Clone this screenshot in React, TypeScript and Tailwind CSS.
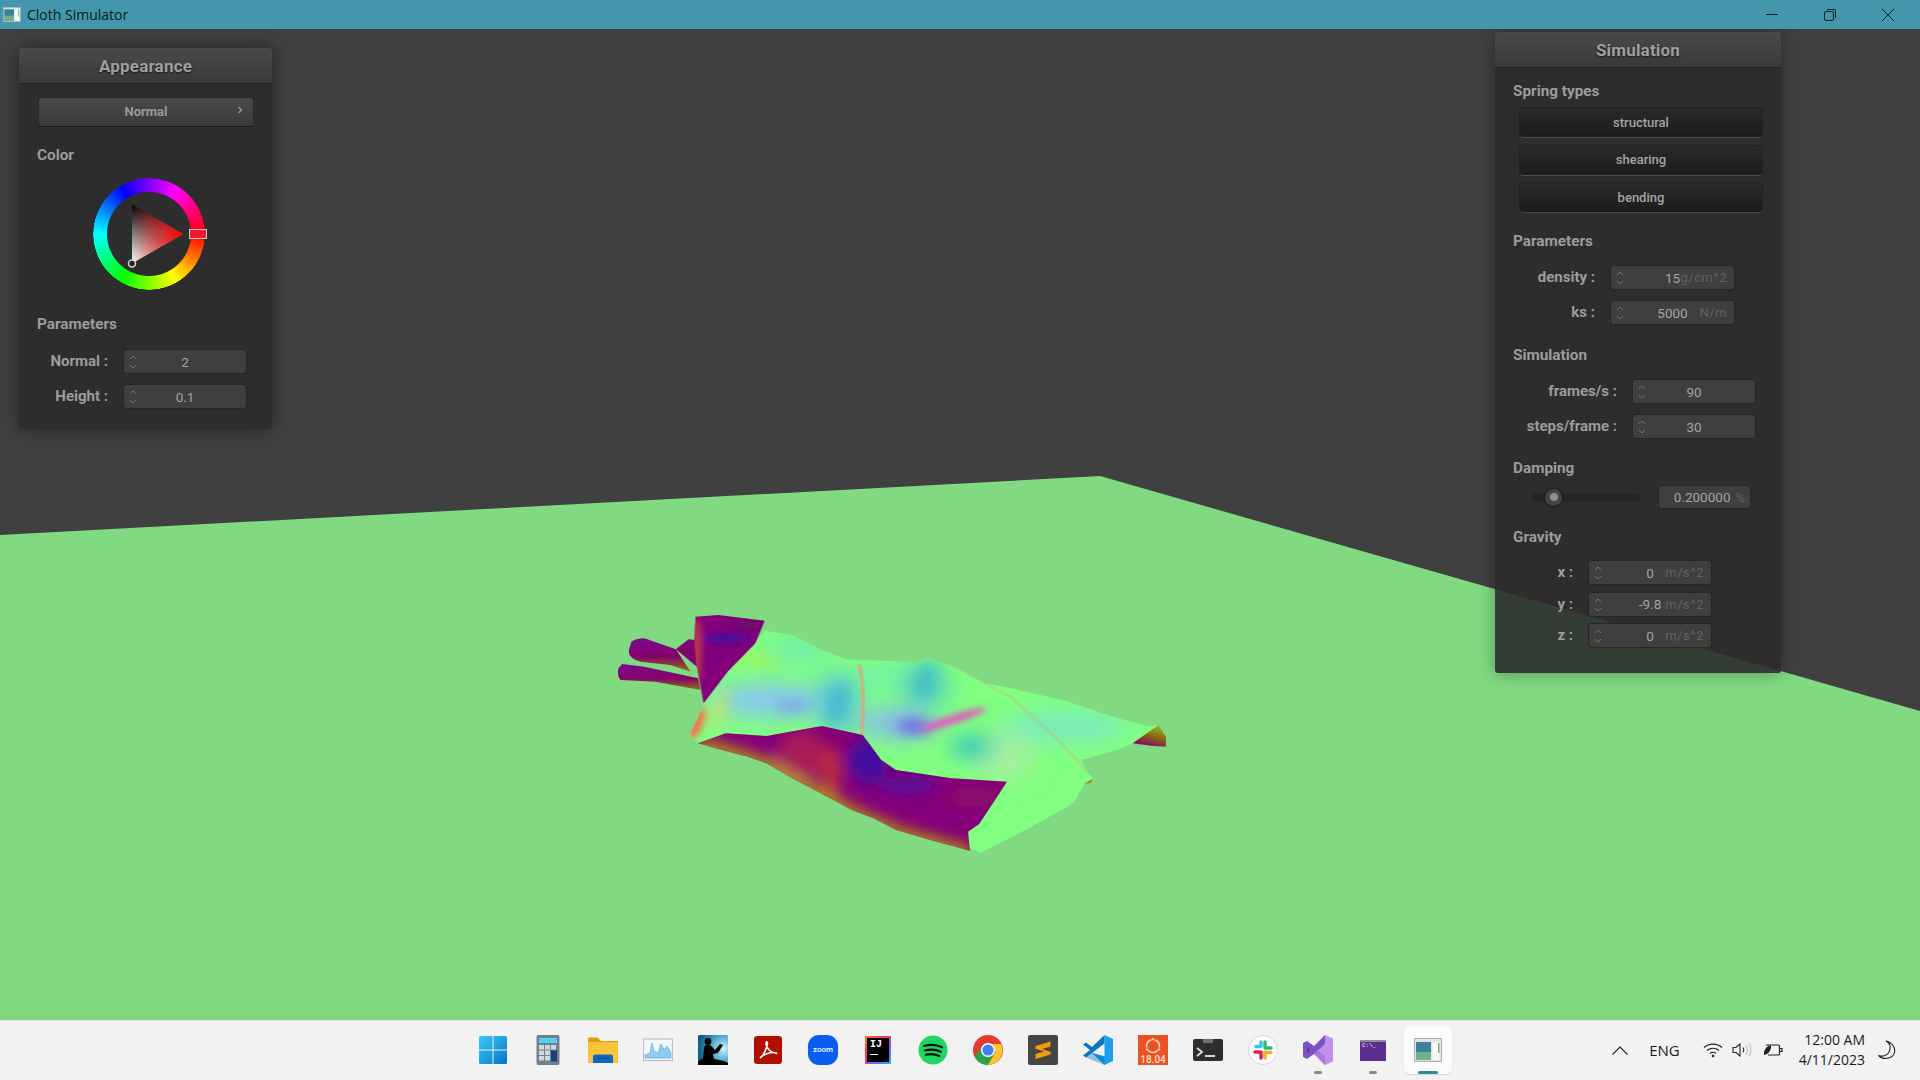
import React from "react";

const SANS = "font-['Roboto','Liberation_Sans',sans-serif]";

function SectionLabel({ children }: { children: React.ReactNode }) {
  return (
    <div className="ml-[18px] flex h-5 items-center pt-[3px] text-[15.3px] font-bold leading-none text-[#9c9c9c]">
      {children}
    </div>
  );
}

function Spinner({ value, unit, className }: { value: string; unit?: string; className: string }) {
  return (
    <div
      className={`relative flex h-[23px] shrink-0 items-center justify-center rounded-[3px] bg-[#3f3f3f] pt-px text-[13.5px] shadow-[0_0_0_1px_#262626] ${className}`}
    >
      <svg viewBox="0 0 8 16" className="absolute left-[5px] top-[4px] h-4 w-2" fill="none" stroke="#747474" strokeWidth="1">
        <path d="M1 5l3-3 3 3M1 11l3 3 3-3" />
      </svg>
      <span className="text-[#a4a4a4]">{value}</span>
      {unit && (
        <span className="absolute right-[7px] text-[13px] tracking-[0.5px] text-[#626262]">{unit}</span>
      )}
    </div>
  );
}

function Row({
  label,
  labelClass,
  children,
}: {
  label: string;
  labelClass: string;
  children: React.ReactNode;
}) {
  return (
    <div className="flex h-[23px] items-center gap-4">
      <span className={`text-right text-[15px] font-bold text-[#9c9c9c] ${labelClass}`}>{label}</span>
      {children}
    </div>
  );
}

function PanelHeader({ title }: { title: string }) {
  return (
    <div className="flex h-9 items-center justify-center rounded-t-[3px] border-b border-[#1f1f1f] bg-gradient-to-b from-[#4a4a4a] to-[#3a3a3a] pt-[2px] text-[17px] font-bold tracking-[0.2px] text-[#a0a0a0] [text-shadow:0_1px_2px_rgba(0,0,0,0.7)]">
      {title}
    </div>
  );
}

function SpringButton({ label }: { label: string }) {
  return (
    <div className="flex h-[29px] items-center justify-center rounded-[3px] bg-gradient-to-b from-[#2a2a2a] to-[#1c1c1c] text-[13px] font-medium text-[#a4a4a4] shadow-[0_1px_0_#4a4a4a,0_0_0_1px_#222]">
      {label}
    </div>
  );
}

function ColorWheel() {
  return (
    <div className="relative ml-[74px] mt-[14px] h-28 w-28">
      <div className="absolute inset-0 rounded-full bg-[conic-gradient(from_90deg,#f00,#ff0,#0f0,#0ff,#00f,#f0f,#f00)] [mask-image:radial-gradient(circle,transparent_41.5px,#000_42.5px,#000_55.5px,transparent_56px)]" />
      <svg viewBox="0 0 112 112" className="absolute inset-0 h-28 w-28">
        <defs>
          <linearGradient id="triV" x1="0" y1="0" x2="0" y2="1">
            <stop offset="0" stopColor="#000" />
            <stop offset="1" stopColor="#fff" />
          </linearGradient>
          <linearGradient id="triH" x1="0" y1="0" x2="1" y2="0">
            <stop offset="0" stopColor="#f00" stopOpacity="0" />
            <stop offset="1" stopColor="#f00" />
          </linearGradient>
        </defs>
        <polygon points="90,56 39,26.5 39,85.5" fill="url(#triV)" />
        <polygon points="90,56 39,26.5 39,85.5" fill="url(#triH)" />
        <circle cx="39" cy="85.5" r="3.5" fill="#222" stroke="#d8d8d8" strokeWidth="1.5" />
      </svg>
      <div className="absolute left-[96px] top-[51px] h-[10px] w-[18px] border border-[#cfcfcf] bg-[#f01830]" />
    </div>
  );
}

function AppearancePanel() {
  return (
    <div className="absolute left-[19px] top-[19px] w-[253px] rounded-[3px] bg-[rgba(43,43,43,0.9)] pb-[21px] shadow-[0_0_18px_rgba(0,0,0,0.45)]">
      <PanelHeader title="Appearance" />
      <div className="relative ml-5 mt-[14px] flex h-7 w-[214px] items-center justify-center rounded-[3px] bg-gradient-to-b from-[#494949] to-[#3a3a3a] text-[13px] font-bold text-[#9a9a9a] shadow-[0_1px_0_#1c1c1c,0_0_0_1px_#2a2a2a]">
        Normal
        <svg viewBox="0 0 6 8" className="absolute right-[10px] top-[8px] h-2 w-[6px]" fill="none" stroke="#9a9a9a" strokeWidth="1.3">
          <path d="M1.5 1l3 3-3 3" />
        </svg>
      </div>
      <div className="mt-[18px]">
        <SectionLabel>Color</SectionLabel>
      </div>
      <ColorWheel />
      <div className="mt-[23px]">
        <SectionLabel>Parameters</SectionLabel>
      </div>
      <div className="mt-[17px] flex flex-col gap-3">
        <Row label="Normal :" labelClass="w-[89px]">
          <Spinner value="2" className="w-[122px]" />
        </Row>
        <Row label="Height :" labelClass="w-[89px]">
          <Spinner value="0.1" className="w-[122px]" />
        </Row>
      </div>
    </div>
  );
}

function SimulationPanel() {
  return (
    <div className="absolute left-[1495px] top-[3px] w-[286px] rounded-[3px] bg-[rgba(43,43,43,0.9)] pb-[26px] shadow-[0_0_18px_rgba(0,0,0,0.35)]">
      <PanelHeader title="Simulation" />
      <div className="mt-3">
        <SectionLabel>Spring types</SectionLabel>
      </div>
      <div className="ml-[25px] mt-2 flex w-[242px] flex-col gap-[8.5px]">
        <SpringButton label="structural" />
        <SpringButton label="shearing" />
        <SpringButton label="bending" />
      </div>
      <div className="mt-[18px]">
        <SectionLabel>Parameters</SectionLabel>
      </div>
      <div className="mt-4 flex flex-col gap-3">
        <Row label="density :" labelClass="w-[100px]">
          <Spinner value="15" unit="g/cm^2" className="w-[123px]" />
        </Row>
        <Row label="ks :" labelClass="w-[100px]">
          <Spinner value="5000" unit="N/m" className="w-[123px]" />
        </Row>
      </div>
      <div className="mt-5">
        <SectionLabel>Simulation</SectionLabel>
      </div>
      <div className="mt-4 flex flex-col gap-3">
        <Row label="frames/s :" labelClass="w-[122px]">
          <Spinner value="90" className="w-[122px]" />
        </Row>
        <Row label="steps/frame :" labelClass="w-[122px]">
          <Spinner value="30" className="w-[122px]" />
        </Row>
      </div>
      <div className="mt-[19px]">
        <SectionLabel>Damping</SectionLabel>
      </div>
      <div className="ml-[37px] mt-[9px] flex h-[22px] items-center gap-[19px]">
        <div className="relative h-[7px] w-[108px] rounded-full bg-[#242424]">
          <div className="absolute left-[13px] top-[-5px] flex h-[17px] w-[17px] items-center justify-center rounded-full bg-[#444] shadow-[0_0_3px_#111]">
            <div className="h-[8px] w-[8px] rounded-full bg-[#8e8e8e]" />
          </div>
        </div>
        <div className="flex h-[22px] w-[91px] items-center justify-end rounded-[3px] bg-[#3f3f3f] pr-[5px] pt-px text-[13.5px] shadow-[0_0_0_1px_#262626]">
          <span className="text-[#a4a4a4]">0.200000</span>
          <span className="ml-[5px] text-[13px] text-[#626262]">%</span>
        </div>
      </div>
      <div className="mt-[18px]">
        <SectionLabel>Gravity</SectionLabel>
      </div>
      <div className="mt-[15px] flex flex-col gap-[8.5px]">
        <Row label="x :" labelClass="w-[78px]">
          <Spinner value="0" unit="m/s^2" className="w-[122px]" />
        </Row>
        <Row label="y :" labelClass="w-[78px]">
          <Spinner value="-9.8" unit="m/s^2" className="w-[122px]" />
        </Row>
        <Row label="z :" labelClass="w-[78px]">
          <Spinner value="0" unit="m/s^2" className="w-[122px]" />
        </Row>
      </div>
    </div>
  );
}

// cloth outlines, traced from the reference
const CLOTH_TOP =
  "240,405 262,360 280,310 345,215 400,150 445,92 520,105 600,150 665,178 850,187 885,175 960,200 1040,250 1100,262 1250,300 1400,355 1480,378 1510,375 1440,430 1400,450 1300,480 1320,520 1335,535 1310,550 1280,610 1150,690 1030,758 1000,745 995,695 1025,672 1100,545 950,535 800,510 760,480 710,405 600,378 450,408 340,400 265,430";
const CLOTH_UNDER =
  "265,430 340,400 450,408 600,378 710,405 760,480 800,510 950,535 1100,545 1025,672 995,695 1000,752 900,722 800,690 740,655 680,630 640,605 580,570 520,535 450,490 400,470 330,450";
const CLOTH_FLAP = "258,50 320,45 445,62 420,130 345,215 280,310 262,200 255,130";

function Cloth() {
  return (
    <g transform="translate(600 600) scale(0.3699 0.33333)">
      <defs>
        <clipPath id="clipTop">
          <polygon points={CLOTH_TOP} />
        </clipPath>
        <clipPath id="clipUnder">
          <polygon points={CLOTH_UNDER} />
        </clipPath>
        <clipPath id="clipFlap">
          <polygon points={CLOTH_FLAP} />
        </clipPath>
        <filter id="blurF" x="-50%" y="-50%" width="200%" height="200%">
          <feGaussianBlur stdDeviation="10" />
        </filter>
        <filter id="blurS" x="-50%" y="-50%" width="200%" height="200%">
          <feGaussianBlur stdDeviation="20" />
        </filter>
        <filter id="blurM" x="-50%" y="-50%" width="200%" height="200%">
          <feGaussianBlur stdDeviation="34" />
        </filter>
        <linearGradient id="tube" x1="0" y1="0" x2="0" y2="1">
          <stop offset="0" stopColor="#7a0a90" />
          <stop offset="0.55" stopColor="#85006a" />
          <stop offset="1" stopColor="#8a7a10" />
        </linearGradient>
        <linearGradient id="corner" x1="0.8" y1="0" x2="0.4" y2="1">
          <stop offset="0" stopColor="#90c030" />
          <stop offset="0.5" stopColor="#8a6a10" />
          <stop offset="1" stopColor="#88006a" />
        </linearGradient>
      </defs>

      {/* tubes on the far left */}
      <polygon points="205,148 240,118 258,120 262,200" fill="#80056f" />
      <path d="M85 125Q100 115 120 115L205 148 245 215 190 195 110 185Q75 175 78 150Z" fill="url(#tube)" />
      <path d="M60 192 120 200 265 235 272 270 150 245 55 240Q45 225 50 205Z" fill="url(#tube)" />

      {/* far corner */}
      <polygon points="1440,430 1490,378 1510,375 1530,410 1530,440 1490,437" fill="url(#corner)" />
      <polygon points="1310,550 1335,535 1325,550" fill="#a08020" />

      {/* top side */}
      <polygon points={CLOTH_TOP} fill="#80ff80" />
      <g clipPath="url(#clipTop)">
        <g filter="url(#blurM)">
          <ellipse cx="540" cy="150" rx="90" ry="35" fill="#70e8b0" />
          <ellipse cx="450" cy="300" rx="150" ry="50" fill="#88c8f0" />
          <ellipse cx="640" cy="310" rx="60" ry="90" fill="#60c8d8" />
          <ellipse cx="800" cy="230" rx="130" ry="35" fill="#70f0a8" />
          <ellipse cx="880" cy="260" rx="60" ry="70" fill="#58d0c0" />
          <ellipse cx="800" cy="370" rx="100" ry="45" fill="#88b8f0" />
          <ellipse cx="1260" cy="380" rx="170" ry="40" fill="#78e8c8" />
          <ellipse cx="1090" cy="470" rx="80" ry="70" fill="#a8f0a0" />
          <ellipse cx="1010" cy="440" rx="60" ry="40" fill="#50d0b8" />
        </g>
        <g filter="url(#blurS)">
          <ellipse cx="520" cy="320" rx="45" ry="18" fill="#7890f0" opacity="0.8" />
          <ellipse cx="645" cy="310" rx="20" ry="70" fill="#30b0c8" opacity="0.8" transform="rotate(12 645 310)" />
          <ellipse cx="880" cy="240" rx="24" ry="60" fill="#38b8c8" opacity="0.8" transform="rotate(15 880 240)" />
          <ellipse cx="850" cy="380" rx="45" ry="20" fill="#7050f0" />
          <ellipse cx="420" cy="180" rx="60" ry="18" fill="#a8f050" opacity="0.8" />
          <ellipse cx="1000" cy="440" rx="35" ry="20" fill="#30c8b8" opacity="0.7" />
          <ellipse cx="320" cy="330" rx="14" ry="60" fill="#d8e060" transform="rotate(18 320 330)" />
        </g>
        <g filter="url(#blurF)">
          <ellipse cx="955" cy="358" rx="95" ry="12" fill="#f048c8" transform="rotate(-20 955 358)" />
          <ellipse cx="262" cy="370" rx="16" ry="50" fill="#ff6848" transform="rotate(18 262 370)" />
        </g>
        <path d="M700 195 C715 250 712 330 708 405" fill="none" stroke="#e8a070" strokeWidth="10" opacity="0.75" />
        <path d="M960 200 L1040 250 L1110 290 L1240 420 L1325 525" fill="none" stroke="#d8b080" strokeWidth="6" opacity="0.45" />
      </g>

      {/* underside */}
      <polygon points={CLOTH_UNDER} fill="#85007a" />
      <g clipPath="url(#clipUnder)">
        <g filter="url(#blurS)">
          <ellipse cx="545" cy="470" rx="70" ry="75" fill="#a81e58" />
          <ellipse cx="625" cy="520" rx="25" ry="80" fill="#c03038" />
          <ellipse cx="725" cy="480" rx="55" ry="70" fill="#4410a0" />
          <ellipse cx="830" cy="555" rx="80" ry="26" fill="#58089a" />
          <ellipse cx="1010" cy="590" rx="70" ry="30" fill="#8c0868" />
          <path d="M265 432 400 478 450 498 520 545 580 580 680 640 800 700 900 732 1000 762" fill="none" stroke="#b09a08" strokeWidth="42" />
        </g>
      </g>

      {/* folded flap */}
      <polygon points={CLOTH_FLAP} fill="#82007c" />
      <g clipPath="url(#clipFlap)">
        <g filter="url(#blurF)">
          <ellipse cx="340" cy="115" rx="65" ry="14" fill="#4410a0" />
          <ellipse cx="262" cy="150" rx="10" ry="100" fill="#d04838" />
          <ellipse cx="400" cy="75" rx="50" ry="12" fill="#6a0860" />
        </g>
      </g>
    </g>
  );
}

function Scene() {
  return (
    <svg viewBox="0 29 1920 991" className="absolute inset-0 h-full w-full">
      <polygon points="0,535 1100,476 1920,711 1920,1020 0,1020" fill="#81da81" />
      <Cloth />
    </svg>
  );
}

function AppWindowIcon({ className }: { className: string }) {
  return (
    <svg viewBox="0 0 28 24" className={className}>
      <rect x="0.5" y="0.5" width="27" height="23" fill="#dfe3e6" stroke="#a9b0b5" />
      <rect x="2" y="4" width="15" height="18" fill="#2f8f8f" />
      <rect x="2" y="4" width="15" height="9" fill="#3f7fa0" />
      <rect x="2" y="14" width="15" height="8" fill="#6fb089" />
      <rect x="18.5" y="4" width="7" height="18" fill="#f7f7f7" />
      <rect x="24" y="5" width="1.5" height="10" fill="#7aa88a" />
    </svg>
  );
}

function TaskIcon({ name }: { name: string }) {
  const size = "h-[30px] w-[30px]";
  switch (name) {
    case "start":
      return (
        <svg viewBox="0 0 30 30" className={size}>
          <defs>
            <linearGradient id="win" x1="0" y1="0" x2="1" y2="1">
              <stop offset="0" stopColor="#3ccbf4" />
              <stop offset="1" stopColor="#0672cc" />
            </linearGradient>
          </defs>
          <path d="M1 2.5A1.5 1.5 0 012.5 1H14.5V14.5H1ZM15.5 1H27.5A1.5 1.5 0 0129 2.5V14.5H15.5ZM1 15.5H14.5V29H2.5A1.5 1.5 0 011 27.5ZM15.5 15.5H29V27.5A1.5 1.5 0 0127.5 29H15.5Z" fill="url(#win)" />
        </svg>
      );
    case "calc":
      return (
        <svg viewBox="0 0 30 30" className={size}>
          <rect x="3.5" y="0" width="23" height="30" rx="2" fill="#72808c" />
          <rect x="6" y="3" width="18" height="5" fill="#52d3f3" />
          {[10, 15.5, 21].map((y) =>
            [6, 12, 18].map((x) =>
              x === 18 && y > 10 ? null : <rect key={`${x}-${y}`} x={x} y={y} width="5" height="4.5" fill="#cfd8de" />
            )
          )}
          <rect x="18" y="15.5" width="6" height="11" fill="#17407f" />
        </svg>
      );
    case "folder":
      return (
        <svg viewBox="0 0 30 30" className={size}>
          <path d="M0 4a1.5 1.5 0 011.5-1.5h8L13 6h17v3H0z" fill="#d99e08" />
          <path d="M0 7h30v21H0z" fill="#fcc33a" />
          <path d="M5 28v-6.5a2 2 0 012-2h16a2 2 0 012 2V28z" fill="#0d68c0" />
          <rect x="10" y="22.5" width="10" height="1" fill="#043f7f" />
        </svg>
      );
    case "monitor":
      return (
        <svg viewBox="0 0 30 30" className={size}>
          <rect x="0.5" y="4" width="29" height="21.5" fill="#f2f7fb" stroke="#b8c0c8" strokeWidth="1.2" />
          <path d="M2 23V20L7 18 9 8 11 16 15 18 18 9 21 15 24 11 28 18V23Z" fill="#8fcdf2" stroke="#4fa2e0" strokeWidth="0.6" />
        </svg>
      );
    case "kindle":
      return (
        <svg viewBox="0 0 30 30" className={size}>
          <defs>
            <radialGradient id="kin" cx="0.85" cy="0.45" r="0.9">
              <stop offset="0" stopColor="#c8f4fc" />
              <stop offset="0.6" stopColor="#2e93bd" />
              <stop offset="1" stopColor="#0b5578" />
            </radialGradient>
          </defs>
          <rect width="30" height="30" rx="1.5" fill="url(#kin)" />
          <circle cx="10" cy="6.5" r="3.4" fill="#000" />
          <path d="M0 30V27L5 23 6 13C6 10.5 8 10 11 10 14 10 15.5 14 17 15L22 9 25 10 20 18 15 19 16 24 26 26 30 28V30Z" fill="#000" />
        </svg>
      );
    case "acrobat":
      return (
        <svg viewBox="0 0 30 30" className={size}>
          <rect x="1" y="1" width="28" height="28" rx="3" fill="#b00f02" />
          <path d="M7 23C10 21 13 15 14.5 9 14.5 6 13 6 13 9 14 14 18 18 24 18.5 21 16.5 14 17.5 9 21" fill="none" stroke="#fff" strokeWidth="1.6" />
        </svg>
      );
    case "zoom":
      return (
        <div className="flex h-[30px] w-[30px] items-center justify-center rounded-[11px] bg-[#0b5cf0] font-['Roboto',sans-serif] text-[8px] font-medium leading-none text-white">
          zoom
        </div>
      );
    case "idea":
      return (
        <div className="flex h-[28px] w-[26px] flex-col bg-[linear-gradient(135deg,#f97a12,#fe315d_35%,#7c5bff_70%,#07c3f2)] p-[2px]">
          <div className="flex flex-1 flex-col bg-black px-[3px] pt-[2px] font-['Liberation_Mono',monospace] text-[10px] font-bold leading-none text-white">
            IJ
            <div className="mt-[4px] h-px w-[8px] bg-white" />
          </div>
        </div>
      );
    case "spotify":
      return (
        <svg viewBox="0 0 30 30" className={size}>
          <circle cx="15" cy="15" r="14.5" fill="#1ed760" />
          <path d="M6 11C12 9.2 18.5 9.5 24 12.3M7 15.5C12.5 14 18 14.4 22.8 16.8M8 19.8C12.5 18.6 17.2 19 21.2 21" fill="none" stroke="#111" strokeWidth="2.2" strokeLinecap="round" />
        </svg>
      );
    case "chrome":
      return (
        <svg viewBox="0 0 30 30" className={size}>
          <circle cx="15" cy="15" r="15" fill="#e33b2e" />
          <path d="M15 15 2 22.5A15 15 0 0015 30L22.5 17Z" fill="#2ba24c" />
          <path d="M15 9H28.2A15 15 0 0115 30L22.5 17Z" fill="#fdc52c" />
          <path d="M2 22.5 8.5 11 15 22Z" fill="#2ba24c" />
          <circle cx="15" cy="15" r="7" fill="#fff" />
          <circle cx="15" cy="15" r="5.6" fill="#3d82f0" />
        </svg>
      );
    case "sublime":
      return (
        <svg viewBox="0 0 30 30" className={size}>
          <rect width="30" height="30" rx="2" fill="#454545" />
          <path d="M7.5 11 22.5 6.5V11.5L14 14 22.5 16.8V19.5L7.5 24V19L16 16.5 7.5 13.8Z" fill="#f59a0e" />
        </svg>
      );
    case "vscode":
      return (
        <svg viewBox="0 0 30 30" className={size}>
          <path d="M21.5 0 30 4V26L21.5 30 8.5 17.5 21.5 21.5V8.5Z" fill="#1c9fee" />
          <path d="M21.5 0V8.5L9 18 3 22.5 0 20.5 7 15 0 9.5 3 7.5 9 12Z" fill="#0a78c4" />
          <path d="M21.5 30 3 22.5 9 18 21.5 21.5Z" fill="#0a6cb4" opacity="0.4" />
        </svg>
      );
    case "ubuntu":
      return (
        <div className="relative flex h-[30px] w-[30px] flex-col items-center bg-[#ea5321]">
          <svg viewBox="0 0 20 20" className="mt-[1px] h-[20px] w-[20px]" fill="none" stroke="#f9d9c9" strokeWidth="1.6">
            <circle cx="10" cy="10" r="6.5" />
            <circle cx="10" cy="3" r="1.6" fill="#f9d9c9" stroke="#ea5321" strokeWidth="0.8" />
            <circle cx="4" cy="13.5" r="1.6" fill="#f9d9c9" stroke="#ea5321" strokeWidth="0.8" />
            <circle cx="16" cy="13.5" r="1.6" fill="#f9d9c9" stroke="#ea5321" strokeWidth="0.8" />
          </svg>
          <span className="absolute bottom-0 font-['Roboto',sans-serif] text-[10px] font-medium leading-[10px] text-[#ffe0d0]">18.04</span>
        </div>
      );
    case "terminal":
      return (
        <svg viewBox="0 0 30 30" className={size}>
          <rect x="0" y="4" width="30" height="22" rx="2" fill="#2d2d2d" />
          <rect x="10" y="4" width="10" height="4" fill="#707070" />
          <path d="M4 13l5 4-5 4" fill="none" stroke="#d8d8d8" strokeWidth="2" />
          <rect x="12" y="20" width="10" height="2" fill="#d8d8d8" />
        </svg>
      );
    case "slack":
      return (
        <svg viewBox="0 0 30 30" className={size}>
          <circle cx="15" cy="15" r="14.5" fill="#fff" stroke="#d5d5d5" />
          <g strokeWidth="3.4" strokeLinecap="round" fill="none">
            <path d="M13 7v4.5M13 11.5H8" stroke="#36c5f0" />
            <path d="M17 7V13" stroke="#2eb67d" />
            <path d="M19 13h4" stroke="#2eb67d" />
            <path d="M17 23v-6" stroke="#ecb22e" />
            <path d="M17.5 17.5H23" stroke="#ecb22e" />
            <path d="M13 17v6" stroke="#e01e5a" />
            <path d="M7 17h4" stroke="#e01e5a" />
          </g>
        </svg>
      );
    case "vs":
      return (
        <svg viewBox="0 0 30 30" className={size}>
          <path d="M22 0 30 3.5V26.5L22 30 8 15.5Z" fill="#c490ee" />
          <path d="M22 0V9L11 19 4 24 0 22V8L4 6 11 11Z" fill="#7f52c4" />
          <path d="M22 30V21L14.5 15 11 19ZM4 11V19L7.5 15Z" fill="#a878e0" />
          <path d="M4 11V19L7.5 15Z" fill="#5b3a99" />
        </svg>
      );
    case "cmd":
      return (
        <div className="flex h-[21px] w-[26px] flex-col bg-[#5c2d91]">
          <div className="h-[2px] bg-[#8d8d9a]" />
          <span className="px-[2px] pt-[1px] font-['Liberation_Mono',monospace] text-[6px] leading-none text-white">C:\_</span>
        </div>
      );
    default:
      return <AppWindowIcon className="h-6 w-7" />;
  }
}

const TASK_ITEMS = [
  "start",
  "calc",
  "folder",
  "monitor",
  "kindle",
  "acrobat",
  "zoom",
  "idea",
  "spotify",
  "chrome",
  "sublime",
  "vscode",
  "ubuntu",
  "terminal",
  "slack",
  "vs",
  "cmd",
  "app",
];

function TaskItem({ name }: { name: string }) {
  const running = name === "vs" || name === "cmd";
  const active = name === "app";
  return (
    <div className="relative flex h-[58px] w-[55px] items-center justify-center">
      {active && (
        <div className="absolute left-[3px] top-[5px] h-12 w-12 rounded-[5px] bg-[#fbfbfb] shadow-[0_1px_1px_rgba(0,0,0,0.12)]" />
      )}
      <div className="relative flex items-center justify-center">
        <TaskIcon name={name} />
      </div>
      {running && <div className="absolute bottom-[5px] h-[3px] w-2 rounded-full bg-[#8a8a8a]" />}
      {active && <div className="absolute bottom-[5px] h-[3px] w-5 rounded-full bg-[#2a8a9c]" />}
    </div>
  );
}

function Tray() {
  return (
    <div className="flex h-[58px] items-center justify-end text-[#1c1c1c]">
      <svg viewBox="0 0 16 9" className="h-[9px] w-4" fill="none" stroke="#222" strokeWidth="1.1">
        <path d="M.5 8.5 8 1l7.5 7.5" />
      </svg>
      <span className="ml-[21px] text-[15px] leading-none">ENG</span>
      <svg viewBox="0 0 20 16" className="ml-[23px] h-4 w-5" fill="none" stroke="#222" strokeWidth="1.2">
        <path d="M1 5.5C6 1 14 1 19 5.5M4 8.5C7.5 5.5 12.5 5.5 16 8.5M7 11.5C8.8 10 11.2 10 13 11.5" />
        <circle cx="10" cy="14" r="1.3" fill="#222" stroke="none" />
      </svg>
      <svg viewBox="0 0 20 16" className="ml-[9px] h-4 w-5" fill="none" stroke="#222" strokeWidth="1.1">
        <path d="M1 5.5H4L8 2V14L4 10.5H1Z" />
        <path d="M11 5.5C12 7 12 9 11 10.5" />
        <path d="M14 3.5C16 6 16 10 14 12.5M17 1.5C19.5 5 19.5 11 17 14.5" stroke="#bbb" />
      </svg>
      <svg viewBox="0 0 20 16" className="ml-[11px] h-4 w-5" fill="none" stroke="#222" strokeWidth="1.2">
        <path d="M3 3H15.5A1 1 0 0116.5 4V12A1 1 0 0115.5 13H5" />
        <path d="M17 6.5H19V9.5H17" />
        <path d="M1 13C.5 8 3 4.5 8 3 8.5 8 6 12 1 13Z" fill="#222" stroke="none" />
      </svg>
      <div className="ml-4 flex flex-col items-end text-[14px] leading-5">
        <span>12:00 AM</span>
        <span>4/11/2023</span>
      </div>
      <svg viewBox="0 0 18 20" className="ml-[13px] mr-6 h-5 w-[18px]" fill="none" stroke="#222" strokeWidth="1.1">
        <path d="M8 1C12.5 3 13 8 11 12 9.5 15 5.5 17 1 15.8 3.5 19 11 19.8 15 15.5 19 10.5 15.5 2.5 8 1Z" />
      </svg>
    </div>
  );
}

export default function App() {
  return (
    <div className={`flex h-screen w-screen flex-col overflow-hidden bg-[#404040] ${SANS}`}>
      <div className="flex h-[29px] shrink-0 items-center bg-[#4497ab] font-['Open_Sans',sans-serif] text-[#0a1a20]">
        <AppWindowIcon className="ml-[3px] h-[15px] w-[18px]" />
        <span className="ml-[6px] flex-1 text-[14px] leading-none">Cloth Simulator</span>
        <div className="flex h-full w-[58px] items-center justify-center">
          <div className="h-px w-3 bg-[#0a1a20]" />
        </div>
        <div className="flex h-full w-[58px] items-center justify-center">
          <svg viewBox="0 0 12 12" className="h-3 w-3" fill="none" stroke="#0a1a20" strokeWidth="1">
            <rect x="0.5" y="2.5" width="9" height="9" rx="1.5" />
            <path d="M3 .5H10A1.5 1.5 0 0111.5 2V9" />
          </svg>
        </div>
        <div className="mr-[3px] flex h-full w-[58px] items-center justify-center">
          <svg viewBox="0 0 12 12" className="h-3 w-3" fill="none" stroke="#0a1a20" strokeWidth="1">
            <path d="M0 0 12 12M12 0 0 12" />
          </svg>
        </div>
      </div>

      <div className="relative flex-1 overflow-hidden">
        <Scene />
        <AppearancePanel />
        <SimulationPanel />
      </div>

      <div className="grid h-[60px] shrink-0 grid-cols-[1fr_auto_1fr] border-t border-[#e2e2e2] bg-[#f2f2f2] font-['Open_Sans',sans-serif]">
        <div />
        <div className="flex pl-px">
          {TASK_ITEMS.map((name) => (
            <TaskItem key={name} name={name} />
          ))}
        </div>
        <Tray />
      </div>
    </div>
  );
}
